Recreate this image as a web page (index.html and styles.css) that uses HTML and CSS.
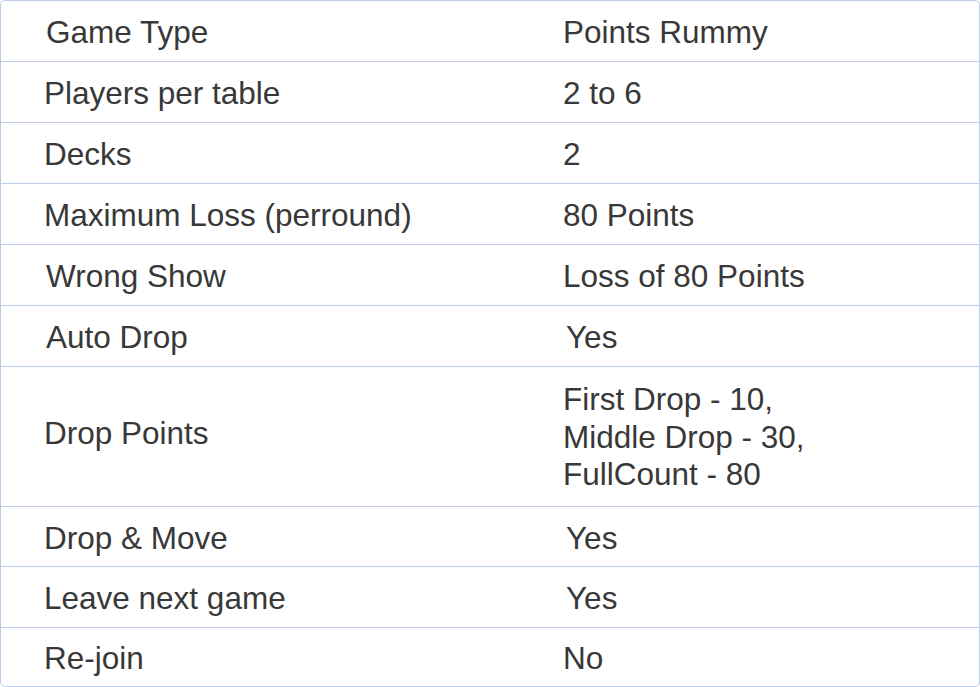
FILE: index.html
```html
<!DOCTYPE html>
<html>
<head>
<meta charset="utf-8">
<link rel="stylesheet" href="styles.css">
</head>
<body>
<table class="rules">
  <colgroup>
    <col class="col-label">
    <col class="col-value">
  </colgroup>
  <tbody>
    <tr><td class="label indent">Game Type</td><td class="value">Points Rummy</td></tr>
    <tr><td class="label">Players per table</td><td class="value">2 to 6</td></tr>
    <tr><td class="label">Decks</td><td class="value">2</td></tr>
    <tr><td class="label">Maximum Loss (perround)</td><td class="value">80 Points</td></tr>
    <tr><td class="label indent">Wrong Show</td><td class="value">Loss of 80 Points</td></tr>
    <tr><td class="label indent">Auto Drop</td><td class="value indent">Yes</td></tr>
    <tr class="tall"><td class="label">Drop Points</td><td class="value">First Drop - 10,<br>Middle Drop - 30,<br>FullCount - 80</td></tr>
    <tr class="short"><td class="label">Drop &amp; Move</td><td class="value indent">Yes</td></tr>
    <tr><td class="label">Leave next game</td><td class="value indent">Yes</td></tr>
    <tr class="last"><td class="label">Re-join</td><td class="value">No</td></tr>
  </tbody>
</table>
</body>
</html>
```

FILE: styles.css
```css
html, body {
  margin: 0;
  padding: 0;
  background: #ffffff;
}

.rules {
  width: 980px;
  table-layout: fixed;
  border-collapse: separate;
  border-spacing: 0;
  border: 1px solid #bccbe9;
  border-radius: 5px;
  font-family: "Liberation Sans", Arial, sans-serif;
  font-size: 31.5px;
  line-height: 37.5px;
  color: #383838;
}

.col-label {
  width: 562px;
}

.rules td {
  border-top: 1px solid #bccbe9;
  vertical-align: middle;
  height: 61px;
  padding: 4px 0 0 0;
  box-sizing: border-box;
  white-space: nowrap;
}

.rules tr:first-child td {
  border-top: none;
  height: 60px;
}

.rules .label {
  padding-left: 43px;
}

.rules .label.indent {
  padding-left: 45px;
}

.rules .value.indent {
  padding-left: 3px;
}

.rules .tall td {
  height: 140px;
  padding-top: 2px;
}

.rules .tall .label {
  padding-top: 0;
  padding-bottom: 6px;
}

.rules .short td {
  height: 60px;
}

.rules .last td {
  height: 59px;
}
```
